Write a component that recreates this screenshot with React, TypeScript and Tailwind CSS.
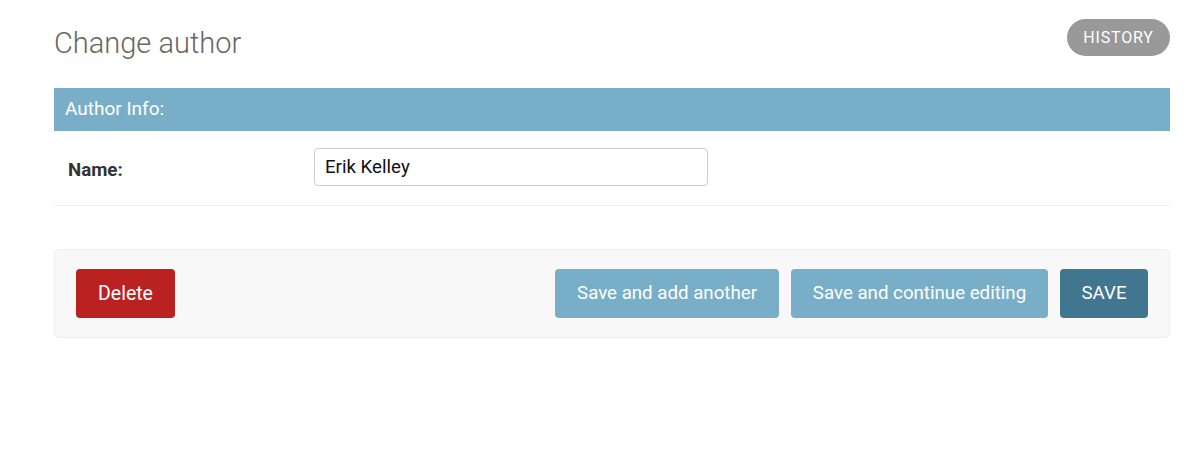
export default function App() {
  const font = { fontFamily: "Roboto, 'Liberation Sans', sans-serif" };

  return (
    <div className="min-h-[461px] w-full bg-white pl-[54px] pr-[30px] pt-[19px]" style={font}>
      {/* Title + history */}
      <div className="flex items-start justify-between">
        <h1 className="mt-[6px] text-[29px] font-light leading-[37px] text-[#666]">Change author</h1>
        <a className="flex h-[37px] w-[103px] items-center justify-center rounded-full bg-[#999] text-[16px] font-normal uppercase tracking-[0.05em] text-white">
          History
        </a>
      </div>

      {/* Fieldset */}
      <div className="mt-[26px]">
        <h2 className="flex h-[43px] items-center bg-[#79aec8] pl-[11px] text-[19px] text-white">
          Author Info:
        </h2>
        <div className="flex items-center border-b border-[#eee] pb-[19px] pt-[17px]">
          <label className="mt-[6px] w-[260px] pl-[14px] text-[18.7px] font-bold text-[#333]">Name:</label>
          <input
            defaultValue="Erik Kelley"
            className="h-[38px] w-[394px] rounded-[4px] border border-[#ccc] px-[10px] text-[18.7px] text-[#111] outline-none"
          />
        </div>
      </div>

      {/* Submit row */}
      <div className="mt-[43px] flex items-center justify-between rounded-[4px] border border-[#eee] bg-[#f8f8f8] px-[21px] py-[19px]">
        <button className="h-[49px] w-[99px] rounded-[4px] bg-[#ba2121] text-[19.5px] text-white">Delete</button>
        <div className="flex items-center gap-[12px]">
          <button className="h-[49px] w-[224px] rounded-[4px] bg-[#79aec8] text-[18.7px] text-white">
            Save and add another
          </button>
          <button className="h-[49px] w-[257px] rounded-[4px] bg-[#79aec8] text-[18.7px] text-white">
            Save and continue editing
          </button>
          <button className="h-[49px] w-[88px] rounded-[4px] bg-[#417690] text-[18.7px] text-white">SAVE</button>
        </div>
      </div>
    </div>
  );
}
